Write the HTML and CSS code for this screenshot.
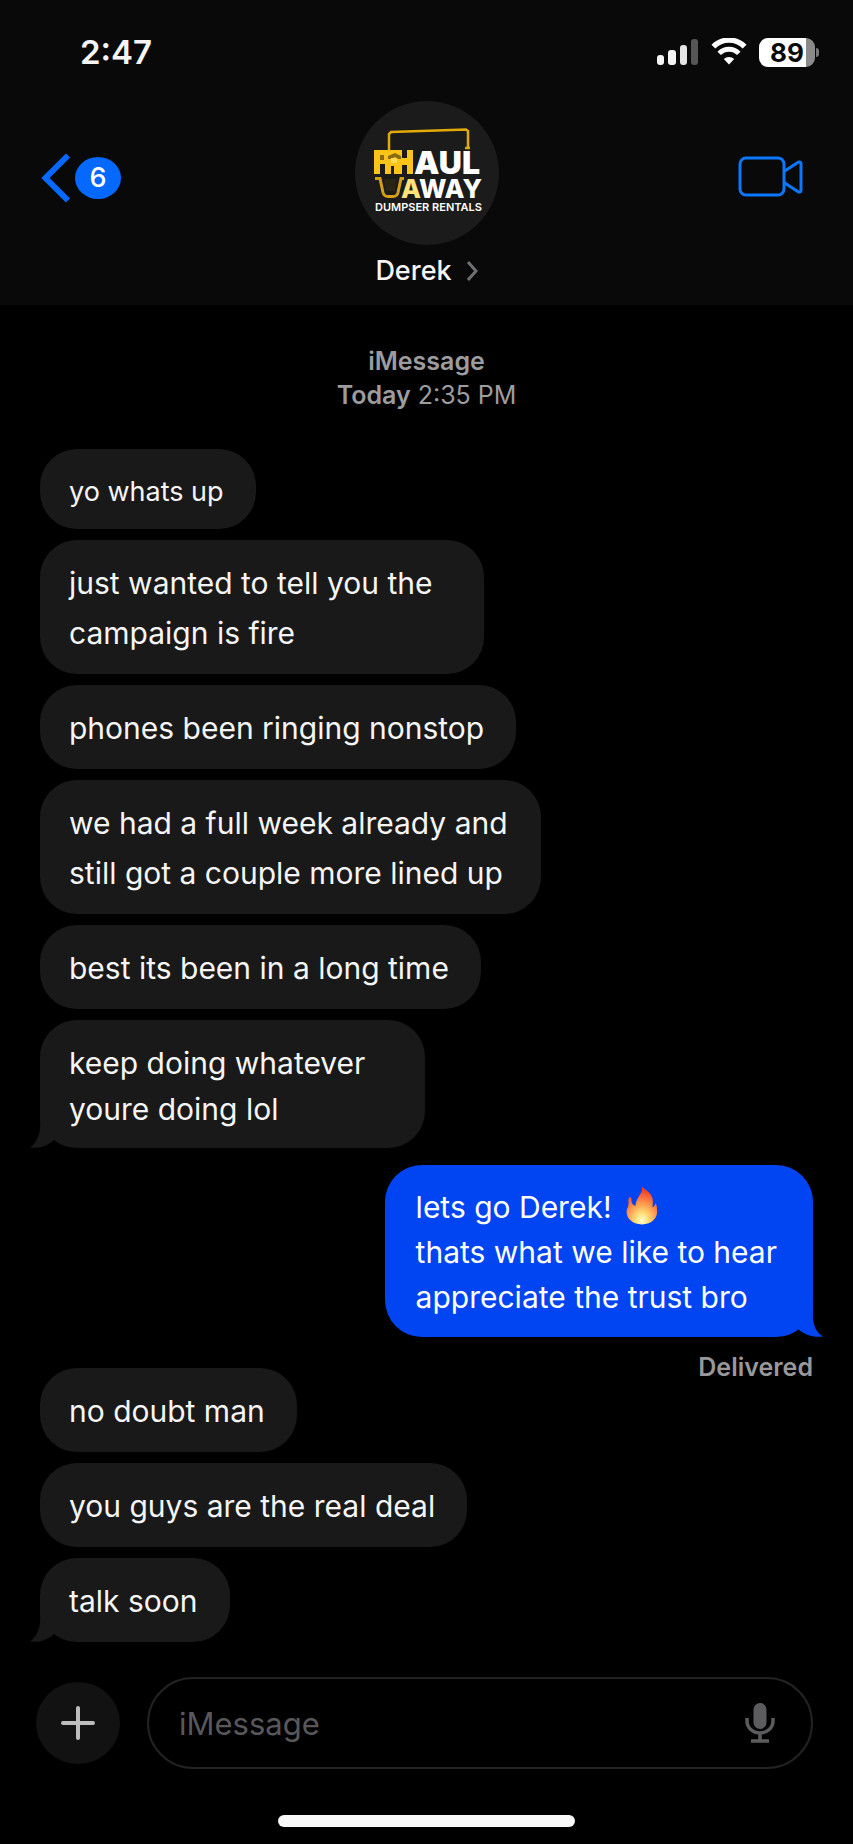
FILE: index.html
```
<!DOCTYPE html>
<html lang="en">
<head>
<meta charset="utf-8">
<meta name="viewport" content="width=device-width, initial-scale=1">
<title>Derek</title>
<link rel="stylesheet" href="styles.css">
</head>
<body>
<div class="phone">
  <header class="top">
    <div class="status">
      <time class="clock">2:47</time>
      <div class="indicators">
        <svg class="signal" width="42" height="28" viewBox="0 0 42 28" aria-hidden="true">
          <rect x="0" y="17" width="7" height="10" rx="3" fill="#f4f4f4"/>
          <rect x="11" y="12" width="8" height="15" rx="3" fill="#f4f4f4"/>
          <rect x="23" y="7" width="7" height="20" rx="3" fill="#e4e4e4"/>
          <rect x="34" y="1" width="7" height="26" rx="3" fill="#555"/>
        </svg>
        <svg class="wifi" width="36" height="28" viewBox="0 0 36 28" aria-hidden="true">
          <path d="M2.400 8.600a22 22 0 0 1 31.200 0" fill="none" stroke="#fff" stroke-width="5.400"/>
          <path d="M8.200 15.400a13.600 13.600 0 0 1 19.600 0" fill="none" stroke="#fff" stroke-width="4.800"/>
          <path d="M18 26.500l-5.200-5.400a7.400 7.400 0 0 1 10.400 0z" fill="#fff"/>
        </svg>
        <div class="battery"><span class="battery-level">89</span></div>
      </div>
    </div>
    <nav class="bar">
      <button class="back" type="button" aria-label="Back, 6 unread">
        <svg width="30" height="50" viewBox="0 0 30 50" aria-hidden="true">
          <path d="M27 2.500L4.500 25L27 47.500" fill="none" stroke="#0568ff" stroke-width="6"/>
        </svg>
        <span class="count">6</span>
      </button>
      <button class="contact" type="button">
        <svg class="avatar" viewBox="0 0 144 144" aria-hidden="true">
          <circle cx="72" cy="72" r="72" fill="#1b1b1b"/>
          <path d="M34 49V33L36 31L111 28.500L113 30V46M110 47h5" fill="none" stroke="#e3a908" stroke-width="2.500"/>
          <path d="M19 49h28v8h5v-8h6v24h-6v-9h-5v9h-8v-8h-3v8h-6v-10h-5v10h-6z" fill="#fcc419"/>
          <path d="M25 54h4v5h-4zM33 55l7-3l6 3v3h-3l-3-2l-4 2h-3z" fill="#3a300f" opacity="0.600"/>
          <path d="M36 57h6v5h-6z" fill="#ffdb4d"/>
          <text class="logo-big" x="59" y="73">AUL</text>
          <path d="M20 77.500h5l3 14q1 4 5 4h5q4 0 5-4l3-14h3" fill="none" stroke="#d59f14" stroke-width="3"/>
          <path d="M29 78h12l-1 12h-9z" fill="#2a2416"/>
          <text class="logo-mid" x="46" y="97"><tspan fill="#ffe27a">A</tspan>WAY</text>
          <text class="logo-small" x="20" y="110">DUMPSER RENTALS</text>
        </svg>
        <span class="name">Derek
          <svg width="12" height="22" viewBox="0 0 12 22" aria-hidden="true">
            <path d="M2 2L10 11L2 20" fill="none" stroke="#707074" stroke-width="3"/>
          </svg>
        </span>
      </button>
      <button class="video" type="button" aria-label="Video call">
        <svg width="66" height="42" viewBox="0 0 66 42" aria-hidden="true">
          <g fill="none" stroke="#0a78ff" stroke-width="3" stroke-linejoin="round">
            <rect x="2" y="2" width="44" height="37" rx="6"/>
            <path d="M46 15.500L60.500 6q2.500-.5 2.500 2v26q0 2.500-2.500 2L46 26.500"/>
          </g>
        </svg>
      </button>
    </nav>
  </header>

  <main class="thread">
    <p class="stamp"><strong>iMessage</strong><br><strong>Today</strong> 2:35 PM</p>
    <p class="bubble first">yo whats up</p>
    <p class="bubble narrow">just wanted to tell you the campaign is fire</p>
    <p class="bubble">phones been ringing nonstop</p>
    <p class="bubble wide">we had a full week already and still got a couple more lined up</p>
    <p class="bubble">best its been in a long time</p>
    <p class="bubble slim tailed">keep doing whatever youre doing lol
      <svg class="tail" width="34" height="36" viewBox="0 0 34 36" aria-hidden="true"><path d="M10 0V8C11 20 8 30 0 35.500C10 37 19 33 24 28L34 14V0z" fill="#191919"/></svg>
    </p>
    <p class="bubble sent tailed">lets go Derek!
      <svg class="flame" width="32" height="38" viewBox="0 0 32 38" role="img" aria-label="fire">
        <defs>
          <radialGradient id="fire" cx="0.5" cy="0.900" r="0.800">
            <stop offset="0" stop-color="#fffbd0"/>
            <stop offset="0.250" stop-color="#ffe07a"/>
            <stop offset="0.550" stop-color="#ffa052"/>
            <stop offset="1" stop-color="#f0442a"/>
          </radialGradient>
        </defs>
        <path d="M16 0C17 7 10 10 9.500 19C6 18 5 15 5.500 11L3.500 10C1 13 4 17 1 22C-1 29 4 37 16 37.500C27 37 32 30 31 23C31 19 30.500 18 29.500 16C29 18 28 20 26.500 20.500C27 15 27 12 26 10C24 5 20 3 16 0z" fill="url(#fire)"/>
      </svg><br>thats what we like to hear<br>appreciate the trust bro
      <svg class="tail" width="34" height="36" viewBox="0 0 34 36" aria-hidden="true"><path d="M24 0V18C25 26 28 32 34 35.500C24 37 14 33 9 28L0 14V0z" fill="#0145f2"/></svg>
    </p>
    <p class="receipt">Delivered</p>
    <p class="bubble">no doubt man</p>
    <p class="bubble">you guys are the real deal</p>
    <p class="bubble tailed">talk soon
      <svg class="tail" width="34" height="36" viewBox="0 0 34 36" aria-hidden="true"><path d="M10 0V8C11 20 8 30 0 35.500C10 37 19 33 24 28L34 14V0z" fill="#191919"/></svg>
    </p>
  </main>

  <footer class="composer">
    <form class="compose-row">
      <button class="add" type="button" aria-label="Add attachment">
        <svg width="34" height="34" viewBox="0 0 34 34" aria-hidden="true">
          <path d="M17 2V32M2 17H32" stroke="#bdbdbd" stroke-width="4" stroke-linecap="round"/>
        </svg>
      </button>
      <div class="field">
        <input class="message" type="text" placeholder="iMessage" aria-label="Message">
        <button class="mic" type="button" aria-label="Dictate">
          <svg width="30" height="40" viewBox="0 0 30 40" aria-hidden="true">
            <rect x="8.500" y="0" width="13" height="26" rx="6.500" fill="#5c5c5e"/>
            <path d="M2 15v3a13 12 0 0 0 26 0v-3M15 30v8M6 38h18" fill="none" stroke="#5c5c5e" stroke-width="3.500"/>
          </svg>
        </button>
      </div>
    </form>
    <div class="home"></div>
  </footer>
</div>
</body>
</html>
```
FILE: styles.css
```
* {
  box-sizing: border-box;
}

body {
  margin: 0;
  background: #000;
  color: #f5f5f5;
  font-family: Inter, "Liberation Sans", sans-serif;
}

button,
input {
  margin: 0;
  padding: 0;
  border: 0;
  background: none;
  color: inherit;
  font: inherit;
}

svg {
  display: block;
}

.phone {
  min-height: 100vh;
  display: flex;
  flex-direction: column;
}

.top {
  background: #090909;
  padding: 32px 34px 17px;
}

.status {
  display: flex;
  align-items: center;
  justify-content: space-between;
  height: 40px;
  padding-left: 46px;
}

.clock {
  font-size: 33px;
  font-weight: 600;
}

.indicators {
  display: flex;
  align-items: center;
  gap: 12px;
}

.battery {
  position: relative;
  width: 56px;
  height: 29px;
  margin-right: 4px;
  border-radius: 9px;
  background: linear-gradient(to right, #fff 84%, #8a8a8a 84%);
  color: #0a0a0a;
  font-size: 26px;
  font-weight: 700;
  line-height: 29px;
  text-align: center;
}

.battery::after {
  content: "";
  position: absolute;
  top: 10px;
  right: -4px;
  width: 3px;
  height: 9px;
  border-radius: 0 4px 4px 0;
  background: #777;
}

.bar {
  display: grid;
  grid-template-columns: 1fr auto 1fr;
  align-items: start;
  padding: 29px 7px 0;
}

.back {
  display: flex;
  align-items: center;
  gap: 4px;
  justify-self: start;
  margin-top: 52px;
}

.count {
  width: 46px;
  height: 42px;
  border-radius: 50%;
  background: #0568ff;
  color: #fff;
  font-size: 27px;
  font-weight: 500;
  line-height: 42px;
}

.contact {
  display: flex;
  flex-direction: column;
  align-items: center;
  gap: 9px;
}

.avatar {
  width: 144px;
  height: 144px;
}

.logo-big {
  fill: #fff;
  font-size: 32px;
  font-weight: 900;
}

.logo-mid {
  fill: #fff;
  font-size: 26px;
  font-weight: 800;
}

.logo-small {
  fill: #fff;
  font-size: 11px;
  font-weight: 600;
}

.name {
  display: flex;
  align-items: center;
  gap: 14px;
  font-size: 27px;
  font-weight: 500;
  line-height: 34px;
}

.video {
  justify-self: end;
  margin-top: 55px;
  margin-right: 8px;
}

.thread {
  flex: 1;
  display: flex;
  flex-direction: column;
  align-items: flex-start;
  gap: 11px;
  padding: 39px 40px 35px;
}

.thread p {
  margin: 0;
}

.thread .stamp {
  align-self: center;
  margin-bottom: 26px;
  color: #9c9c9f;
  font-size: 25px;
  line-height: 34px;
  text-align: center;
}

.stamp strong {
  font-weight: 600;
}

.bubble {
  position: relative;
  padding: 18px 32px 16px 29px;
  border-radius: 37px;
  background: #191919;
  font-size: 30px;
  line-height: 50px;
}

.first {
  padding-top: 20px;
  padding-bottom: 14px;
  font-size: 27px;
  line-height: 46px;
}

.narrow {
  max-width: 444px;
}

.wide {
  max-width: 501px;
}

.slim {
  max-width: 385px;
  padding-top: 20px;
  line-height: 46px;
}

.thread .sent {
  align-self: flex-end;
  margin-top: 6px;
  padding: 20px 36px 17px 31px;
  background: #0145f2;
  color: #fff;
  line-height: 45px;
}

.tail {
  position: absolute;
  bottom: 0;
  left: -10px;
}

.sent .tail {
  left: auto;
  right: -10px;
}

.flame {
  display: inline-block;
  margin-left: 6px;
  vertical-align: -7px;
}

.thread .receipt {
  align-self: flex-end;
  margin-top: 5px;
  margin-bottom: -24px;
  color: #98989b;
  font-size: 25px;
  font-weight: 600;
  line-height: 28px;
}

.composer {
  padding: 0 36px 19px;
}

.compose-row {
  display: flex;
  align-items: center;
  gap: 27px;
  margin-right: 4px;
}

.add {
  display: grid;
  place-items: center;
  width: 84px;
  height: 82px;
  border-radius: 50%;
  background: #121212;
}

.field {
  flex: 1;
  display: flex;
  align-items: center;
  height: 92px;
  padding: 0 36px 0 30px;
  border: 2px solid #222;
  border-radius: 46px;
}

.message {
  flex: 1;
  min-width: 0;
  outline: none;
  font-size: 31px;
}

.message::placeholder {
  color: #58585b;
  opacity: 1;
}

.home {
  width: 297px;
  height: 12px;
  margin: 46px auto 0;
  border-radius: 6px;
  background: #fafafa;
}
```
